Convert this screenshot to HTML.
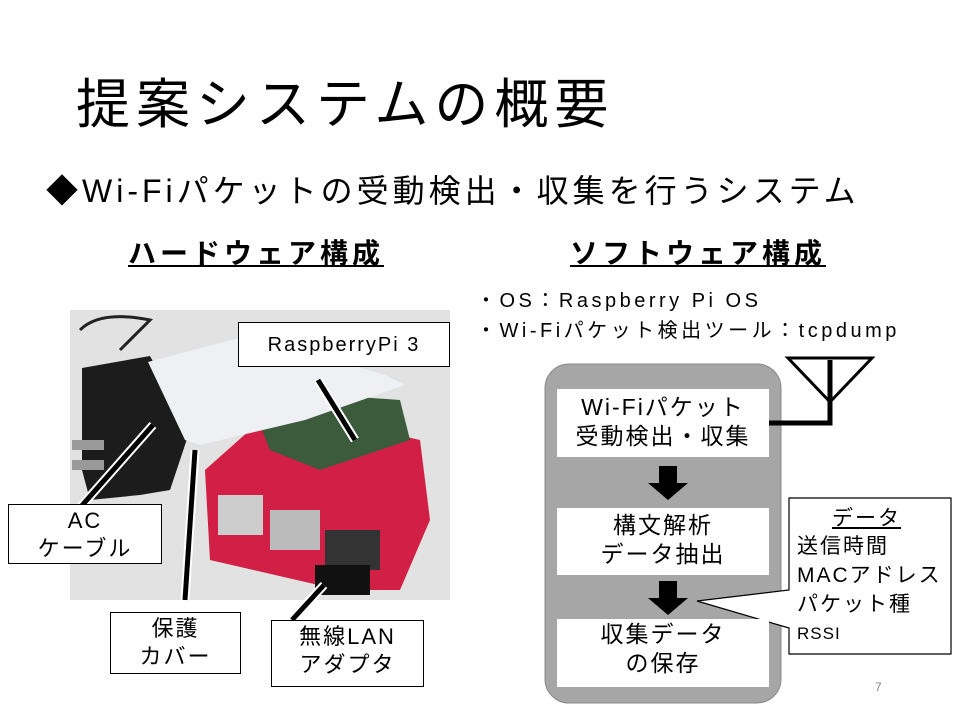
<!DOCTYPE html>
<html><head><meta charset="utf-8"><style>
body{margin:0;width:960px;height:720px;background:#fff;position:relative;overflow:hidden;font-family:"Liberation Sans","Noto Sans CJK JP",sans-serif;color:#000}
.a{position:absolute;white-space:nowrap}
.box{position:absolute;background:#fff;border:1px solid #000;text-align:center;box-sizing:border-box;line-height:1.25;letter-spacing:2px}
</style></head><body>
<div class="a" style="left:76px;top:60px;font-size:54px;letter-spacing:6px">提案システムの概要</div>
<div class="a" style="left:46px;top:166px;font-size:32px;letter-spacing:4px">◆Wi-Fiパケットの受動検出・収集を行うシステム</div>
<div class="a" style="left:128px;top:232px;font-size:28px;font-weight:bold;text-decoration:underline;letter-spacing:4px">ハードウェア構成</div>
<div class="a" style="left:570px;top:232px;font-size:28px;font-weight:bold;text-decoration:underline;letter-spacing:4px">ソフトウェア構成</div>
<div class="a" style="left:476px;top:286px;font-size:20px;line-height:30px;letter-spacing:3.5px">・OS：Raspberry Pi OS<br>・Wi-Fiパケット検出ツール：tcpdump</div>

<svg style="position:absolute;left:0;top:0" width="960" height="720">
<rect x="70" y="310" width="380" height="290" fill="#e2e2e2"/>
<path d="M80 330 Q100 310 150 320 L120 350" stroke="#222" stroke-width="3" fill="none"/>
<polygon points="82,368 150,356 190,430 170,490 140,495 90,500 82,470" fill="#1c1c1c"/>
<rect x="72" y="440" width="32" height="10" fill="#999"/><rect x="72" y="460" width="32" height="10" fill="#999"/>
<polygon points="205,470 250,430 330,420 420,440 430,520 400,590 340,590 210,560" fill="#d21f45"/>
<rect x="218" y="495" width="45" height="40" fill="#ccc"/>
<rect x="270" y="510" width="50" height="40" fill="#bbb"/>
<rect x="325" y="530" width="55" height="40" fill="#333"/>
<rect x="315" y="565" width="55" height="30" fill="#111"/>
<polygon points="260,425 330,395 400,400 410,440 320,470 270,450" fill="#3c5a3c"/>
<polygon points="148,362 250,335 385,375 405,385 305,420 200,445 185,440" fill="#eef0f4"/>
<line x1="153" y1="425" x2="78" y2="510" stroke="#fff" stroke-width="9"/>
<line x1="153" y1="425" x2="78" y2="510" stroke="#000" stroke-width="5"/>
<line x1="195" y1="450" x2="185" y2="600" stroke="#fff" stroke-width="9"/>
<line x1="195" y1="450" x2="185" y2="600" stroke="#000" stroke-width="5"/>
<line x1="318" y1="380" x2="355" y2="440" stroke="#fff" stroke-width="9"/>
<line x1="318" y1="380" x2="355" y2="440" stroke="#000" stroke-width="5"/>
<line x1="324" y1="585" x2="292" y2="620" stroke="#fff" stroke-width="9"/>
<line x1="324" y1="585" x2="292" y2="620" stroke="#000" stroke-width="5"/>
<rect x="545" y="364" width="236" height="339" rx="24" fill="#a6a6a6" stroke="#888"/>
<polygon points="788,358 872,358 830,402" fill="none" stroke="#000" stroke-width="3"/>
<polyline points="830,360 830,423 769,423" fill="none" stroke="#000" stroke-width="5"/>
<polygon points="659,466 677,466 677,483 688,483 668,500 648,483 659,483"/>
<polygon points="659,581 677,581 677,598 688,598 668,615 648,598 659,598"/>
<polygon points="789,498 951,498 951,654 789,654 789,628 697,601 789,590" fill="#fff" stroke="#000" stroke-width="1.2"/>
</svg>
<div class="box" style="left:238px;top:322px;width:212px;height:45px;font-size:20px;padding-top:10px">RaspberryPi 3</div>
<div class="box" style="left:8px;top:504px;width:154px;height:60px;font-size:22px;padding-top:2px">AC<br>ケーブル</div>
<div class="box" style="left:110px;top:612px;width:131px;height:62px;font-size:22px;padding-top:2px">保護<br>カバー</div>
<div class="box" style="left:271px;top:620px;width:153px;height:67px;font-size:22px;padding-top:2px">無線LAN<br>アダプタ</div>
<div class="box" style="left:557px;top:389px;width:212px;height:68px;font-size:23px;border:none;padding-top:4px">Wi-Fiパケット<br>受動検出・収集</div>
<div class="box" style="left:557px;top:508px;width:212px;height:67px;font-size:23px;border:none;padding-top:3px">構文解析<br>データ抽出</div>
<div class="box" style="left:557px;top:619px;width:212px;height:68px;font-size:23px;border:none;padding-top:1px">収集データ<br>の保存</div>
<div class="a" style="left:832px;top:502px;font-size:21px;text-decoration:underline;letter-spacing:2px">データ</div>
<div class="a" style="left:797px;top:532px;font-size:21px;line-height:29px;letter-spacing:2px">送信時間<br>MACアドレス<br>パケット種</div>
<div class="a" style="left:797px;top:624px;font-size:17px;letter-spacing:1px">RSSI</div>
<div class="a" style="left:875px;top:680px;font-size:12px;color:#888">7</div>
</body></html>
